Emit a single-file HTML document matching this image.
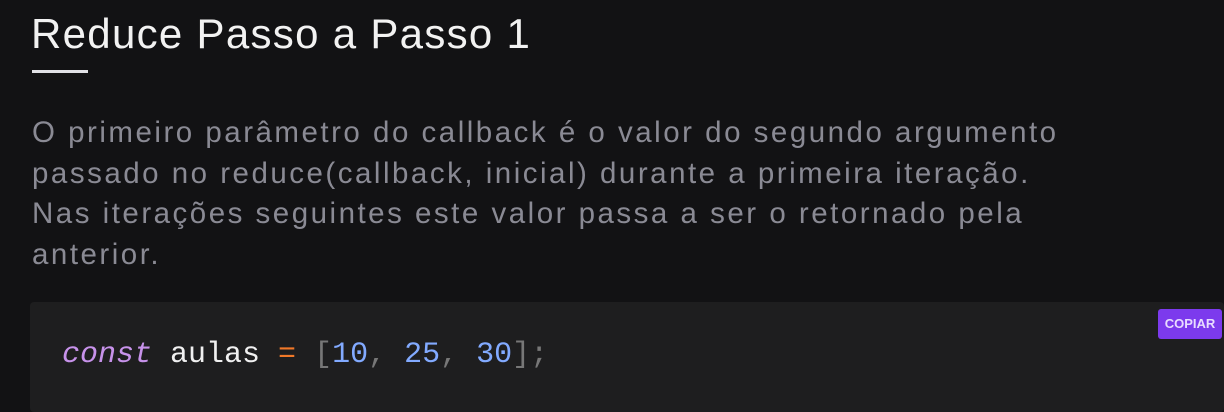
<!DOCTYPE html>
<html><head><style>
body{margin:0;width:1224px;height:405px;background:#121214;overflow:hidden;font-family:"Liberation Sans",sans-serif;position:relative}
h1{position:absolute;left:31px;top:10px;margin:0;font-weight:400;font-size:42px;color:#f2f2f2;letter-spacing:1.3px;white-space:nowrap}
.ul{position:absolute;left:32px;top:70px;width:56px;height:3px;background:#e1e1e6}
p{position:absolute;left:32px;top:113px;margin:0;width:1150px;font-size:29.5px;letter-spacing:2.5px;line-height:40.5px;color:#8a8a94;white-space:nowrap}
.code{position:absolute;left:30px;top:302px;width:1194px;height:110px;background:#1e1e1f;border-radius:4px}
.btn{position:absolute;left:1158px;top:309px;width:64px;height:30px;background:#7c3aed;border-radius:3px;color:#e8dcff;font-size:13px;font-weight:700;text-align:center;line-height:30px}
pre{position:absolute;left:62px;top:338px;margin:0;font-family:"Liberation Mono",monospace;font-size:30px;color:#f0f0f0}
.k{color:#c792ea;font-style:italic}.o{color:#f07828}.n{color:#82aaff}.p{color:#777}
</style></head><body>
<h1>Reduce Passo a Passo 1</h1>
<div class="ul"></div>
<p>O primeiro parâmetro do callback é o valor do segundo argumento<br>passado no reduce(callback, inicial) durante a primeira iteração.<br>Nas iterações seguintes este valor passa a ser o retornado pela<br>anterior.</p>
<div class="code"></div>
<div class="btn">COPIAR</div>
<pre><span class="k">const</span> aulas <span class="o">=</span> <span class="p">[</span><span class="n">10</span><span class="p">, </span><span class="n">25</span><span class="p">, </span><span class="n">30</span><span class="p">];</span></pre>
</body></html>
